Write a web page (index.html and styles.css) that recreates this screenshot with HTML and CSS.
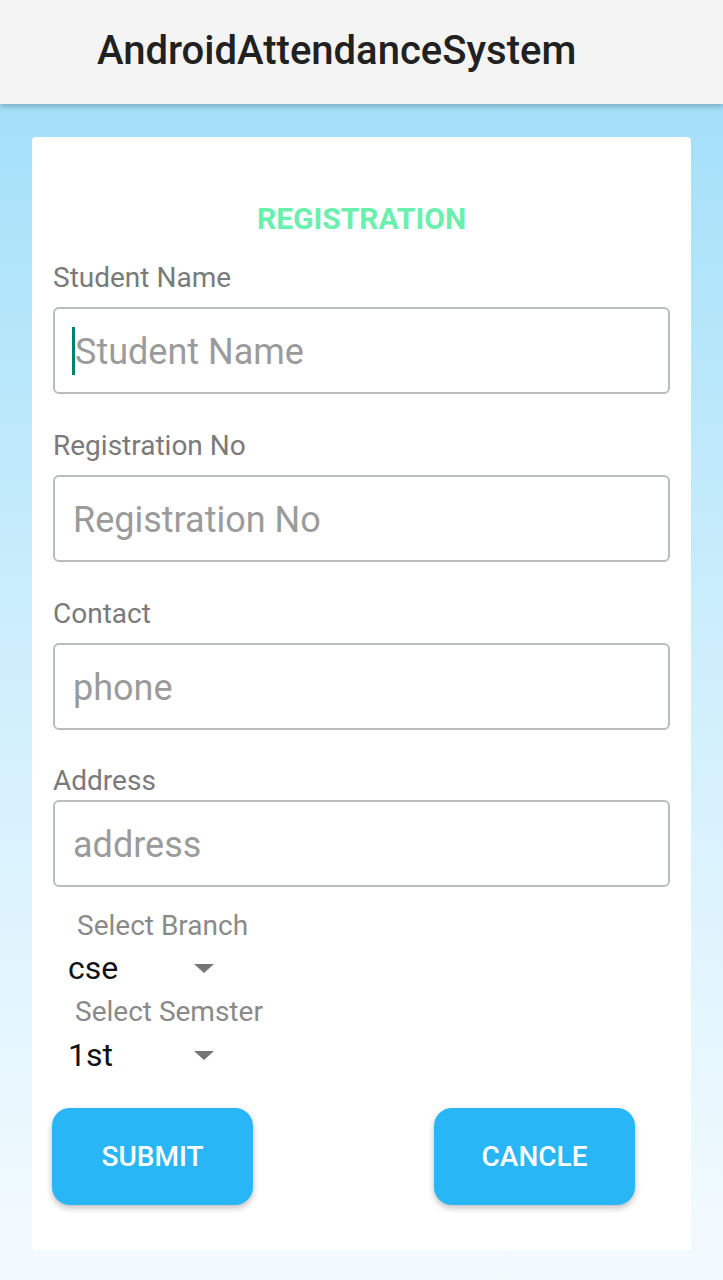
FILE: index.html
```html
<!DOCTYPE html>
<html lang="en">
<head>
<meta charset="utf-8">
<title>AndroidAttendanceSystem</title>
<link rel="stylesheet" href="styles.css">
</head>
<body>
<header class="toolbar">
  <h1 class="toolbar-title">AndroidAttendanceSystem</h1>
</header>
<main class="card">
  <h2 class="heading">REGISTRATION</h2>

  <div class="field field-first">
    <div class="field-label">Student Name</div>
    <div class="input"><span class="caret"></span><span class="placeholder">Student Name</span></div>
  </div>

  <div class="field">
    <div class="field-label">Registration No</div>
    <div class="input"><span class="placeholder">Registration No</span></div>
  </div>

  <div class="field">
    <div class="field-label">Contact</div>
    <div class="input"><span class="placeholder">phone</span></div>
  </div>

  <div class="field field-tight">
    <div class="field-label">Address</div>
    <div class="input"><span class="placeholder">address</span></div>
  </div>

  <div class="spinners">
    <div class="spinner-label">Select Branch</div>
    <div class="spinner"><span class="spinner-value">cse</span><span class="arrow"></span></div>
    <div class="spinner-label spinner-label-second">Select Semster</div>
    <div class="spinner spinner-second"><span class="spinner-value">1st</span><span class="arrow"></span></div>
  </div>

  <div class="actions">
    <button class="btn" type="button">SUBMIT</button>
    <button class="btn" type="button">CANCLE</button>
  </div>
</main>
</body>
</html>
```

FILE: styles.css
```css
html, body {
  margin: 0;
  padding: 0;
}

body {
  width: 723px;
  height: 1280px;
  overflow: hidden;
  font-family: Roboto, "Noto Sans", "Liberation Sans", sans-serif;
  background: linear-gradient(to bottom, #a2dff9 0px, #a4e0f9 110px, #cdeefc 640px, #f4fbff 1280px);
}

.toolbar {
  position: relative;
  z-index: 1;
  height: 104px;
  box-sizing: border-box;
  padding: 27px 0 0 97px;
  background: #f4f4f4;
  box-shadow: 0 2px 6px rgba(0, 0, 0, 0.28);
}

.toolbar-title {
  margin: 0;
  font-size: 40px;
  font-weight: 500;
  line-height: 48px;
  color: #212121;
}

.card {
  display: flex;
  flex-direction: column;
  width: 659px;
  height: 1113px;
  box-sizing: border-box;
  margin: 33px 0 0 32px;
  padding: 64px 21px 0;
  background: #ffffff;
  border-radius: 4px;
}

.heading {
  margin: 0;
  font-size: 30px;
  font-weight: 700;
  line-height: 36px;
  color: #69f0ae;
  text-align: center;
}

.field {
  display: flex;
  flex-direction: column;
  gap: 12px;
  margin-top: 35px;
}

.field-first {
  margin-top: 24px;
}

.field-tight {
  margin-top: 34px;
  gap: 2px;
}

.field-label {
  font-size: 28px;
  line-height: 34px;
  color: #7a7a7a;
}

.input {
  display: flex;
  align-items: center;
  height: 87px;
  box-sizing: border-box;
  padding-left: 17px;
  border: 2px solid #b9bdbd;
  border-radius: 6px;
  background: #ffffff;
}

.caret {
  width: 3px;
  height: 48px;
  margin-right: -1px;
  background: #00806e;
}

.placeholder {
  padding: 3px 0 0 1px;
  font-size: 36px;
  line-height: 44px;
  color: #9b9b9b;
}

.spinners {
  display: flex;
  flex-direction: column;
  margin-top: 22px;
}

.spinner-label {
  padding-left: 24px;
  font-size: 28px;
  line-height: 34px;
  color: #8a8a8a;
}

.spinner-label-second {
  margin-top: 7px;
  padding-left: 22px;
}

.spinner {
  display: flex;
  align-items: center;
  margin-top: 5px;
  padding-left: 15px;
  height: 40px;
}

.spinner-second {
  margin-top: 6px;
}

.spinner-value {
  flex: 0 0 126px;
  font-size: 32px;
  line-height: 40px;
  color: #111111;
}

.arrow {
  width: 0;
  height: 0;
  border-left: 10px solid transparent;
  border-right: 10px solid transparent;
  border-top: 9px solid #757575;
}

.actions {
  display: flex;
  gap: 181px;
  margin: 33px 0 0 -1px;
}

.btn {
  width: 201px;
  height: 97px;
  padding: 0;
  border: none;
  border-radius: 18px;
  background: #29b6f6;
  color: #ffffff;
  font-family: Roboto, "Noto Sans", "Liberation Sans", sans-serif;
  font-size: 28px;
  font-weight: 500;
  box-shadow: 0 3px 6px rgba(0, 0, 0, 0.25);
}
```
